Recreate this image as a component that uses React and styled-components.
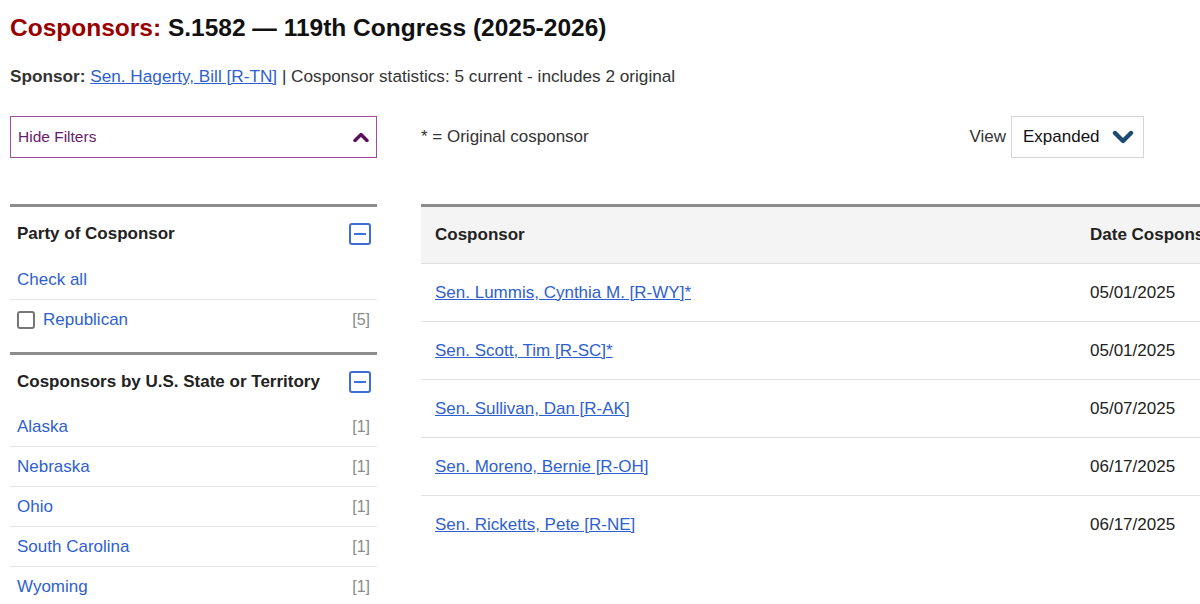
import React from "react";
import styled, { createGlobalStyle } from "styled-components";

const Global = createGlobalStyle`
  html, body { margin: 0; padding: 0; background: #fff; overflow: hidden; }
  body { font-family: "Liberation Sans", Arial, sans-serif; color: #222; font-size: 17px; }
  * { box-sizing: border-box; }
`;

const Page = styled.div`
  padding: 13px 0 0 10px;
  width: 1200px;
`;

const Title = styled.h1`
  margin: 0;
  font-size: 24.5px;
  line-height: 30px;
  font-weight: bold;
  color: #111;
`;

const Red = styled.span`
  color: #990000;
`;

const SponsorLine = styled.p`
  margin: 23px 0 0;
  font-size: 17.2px;
  line-height: 20px;
  color: #333;
`;

const Link = styled.a`
  color: #2f5fd0;
  text-decoration: underline;
  cursor: pointer;
`;

const Layout = styled.div`
  margin-top: 30px;
  display: grid;
  grid-template-columns: 367px 723px;
  column-gap: 44px;
`;

const Column = styled.div`
  display: flex;
  flex-direction: column;
  gap: 46px;
  min-width: 0;
`;

const FilterToggle = styled.button`
  height: 42px;
  width: 100%;
  border: 1px solid #9c4e9c;
  background: #fff;
  display: flex;
  align-items: center;
  justify-content: space-between;
  padding: 0 7px 0 7px;
  font-family: inherit;
  font-size: 15.5px;
  color: #6a1b6a;
  cursor: pointer;
`;

const Sidebar = styled.div`
  display: flex;
  flex-direction: column;
  gap: 12px;
`;

const Section = styled.section`
  border-top: 3px solid #8c8c8c;
`;

const SectionHead = styled.div`
  display: flex;
  align-items: center;
  justify-content: space-between;
  padding: 16px 6px ${(p) => (p.$tight ? "14px" : "15px")} 7px;
  line-height: 20px;
  font-weight: bold;
  color: #222;
`;

const MinusBox = styled.span`
  width: 22px;
  height: 22px;
  border: 2px solid #3d6ed8;
  border-radius: 3px;
  display: flex;
  align-items: center;
  justify-content: center;
  &::after {
    content: "";
    width: 12px;
    height: 2px;
    background: #3d6ed8;
  }
`;

const FacetRow = styled.div`
  display: flex;
  align-items: center;
  justify-content: space-between;
  height: 40px;
  padding: 0 7px;
  line-height: 20px;
  border-bottom: ${(p) => (p.$last ? "none" : "1px solid #e6e6e6")};
`;

const FacetLabel = styled.span`
  display: flex;
  align-items: center;
  gap: 8px;
  color: #2f5fd0;
`;

const Checkbox = styled.span`
  width: 18px;
  height: 18px;
  border: 2px solid #777;
  border-radius: 3px;
  background: #fff;
`;

const Count = styled.span`
  color: #8a8a8a;
  font-size: 16px;
`;

const Toolbar = styled.div`
  height: 42px;
  display: flex;
  align-items: center;
  justify-content: space-between;
  color: #333;
`;

const ViewGroup = styled.div`
  display: flex;
  align-items: center;
  gap: 5px;
  height: 100%;
`;

const Select = styled.div`
  height: 42px;
  width: 133px;
  border: 1px solid #d4d4d4;
  display: flex;
  align-items: center;
  justify-content: space-between;
  padding: 0 9px 0 11px;
  color: #111;
`;

const TableWrap = styled.div`
  width: 1000px;
`;

const Table = styled.table`
  border-collapse: collapse;
  width: 100%;
  border-top: 3px solid #8c8c8c;
  table-layout: fixed;
`;

const Th = styled.th`
  background: #f4f4f4;
  text-align: left;
  font-weight: bold;
  height: 58px;
  padding: 0 14px;
  border-bottom: 1px solid #e0e0e0;
  white-space: nowrap;
  overflow: hidden;
  width: ${(p) => p.$w || "auto"};
`;

const Td = styled.td`
  height: 58px;
  padding: 0 14px;
  border-bottom: ${(p) => (p.$last ? "none" : "1px solid #e0e0e0")};
  color: #222;
  vertical-align: middle;
`;

const ChevronUp = () => (
  <svg width="16" height="10" viewBox="0 0 16 10">
    <polyline points="2,8.5 8,2.5 14,8.5" fill="none" stroke="#5a0f5a" strokeWidth="3.4" strokeLinecap="round" strokeLinejoin="round" />
  </svg>
);

const ChevronDown = () => (
  <svg width="22" height="16" viewBox="0 0 22 16">
    <polyline points="3,4 11,12 19,4" fill="none" stroke="#1d4a73" strokeWidth="4.4" strokeLinecap="round" strokeLinejoin="round" />
  </svg>
);

const states = ["Alaska", "Nebraska", "Ohio", "South Carolina", "Wyoming"];

const rows = [
  ["Sen. Lummis, Cynthia M. [R-WY]*", "05/01/2025"],
  ["Sen. Scott, Tim [R-SC]*", "05/01/2025"],
  ["Sen. Sullivan, Dan [R-AK]", "05/07/2025"],
  ["Sen. Moreno, Bernie [R-OH]", "06/17/2025"],
  ["Sen. Ricketts, Pete [R-NE]", "06/17/2025"],
];

export default function App() {
  return (
    <>
      <Global />
      <Page>
        <Title>
          <Red>Cosponsors:</Red> S.1582 — 119th Congress (2025-2026)
        </Title>
        <SponsorLine>
          <b>Sponsor:</b> <Link>Sen. Hagerty, Bill [R-TN]</Link> | Cosponsor statistics: 5 current - includes 2 original
        </SponsorLine>
        <Layout>
          <Column>
            <FilterToggle>
              <span>Hide Filters</span>
              <ChevronUp />
            </FilterToggle>
            <Sidebar>
              <Section>
                <SectionHead>
                  <span>Party of Cosponsor</span>
                  <MinusBox />
                </SectionHead>
                <FacetRow>
                  <FacetLabel>Check all</FacetLabel>
                </FacetRow>
                <FacetRow $last>
                  <FacetLabel>
                    <Checkbox />
                    Republican
                  </FacetLabel>
                  <Count>[5]</Count>
                </FacetRow>
              </Section>
              <Section>
                <SectionHead $tight>
                  <span>Cosponsors by U.S. State or Territory</span>
                  <MinusBox />
                </SectionHead>
                {states.map((s, i) => (
                  <FacetRow key={s} $last={i === states.length - 1}>
                    <FacetLabel>{s}</FacetLabel>
                    <Count>[1]</Count>
                  </FacetRow>
                ))}
              </Section>
            </Sidebar>
          </Column>
          <Column>
            <Toolbar>
              <span>* = Original cosponsor</span>
              <ViewGroup>
                <span>View</span>
                <Select>
                  <span>Expanded</span>
                  <ChevronDown />
                </Select>
              </ViewGroup>
            </Toolbar>
            <TableWrap>
              <Table>
                <thead>
                  <tr>
                    <Th $w="655px">Cosponsor</Th>
                    <Th $w="200px">Date Cosponsored</Th>
                    <Th>Withdrawn</Th>
                  </tr>
                </thead>
                <tbody>
                  {rows.map(([n, d], i) => (
                    <tr key={n}>
                      <Td $last={i === rows.length - 1}>
                        <Link>{n}</Link>
                      </Td>
                      <Td $last={i === rows.length - 1}>{d}</Td>
                      <Td $last={i === rows.length - 1}></Td>
                    </tr>
                  ))}
                </tbody>
              </Table>
            </TableWrap>
          </Column>
        </Layout>
      </Page>
    </>
  );
}
